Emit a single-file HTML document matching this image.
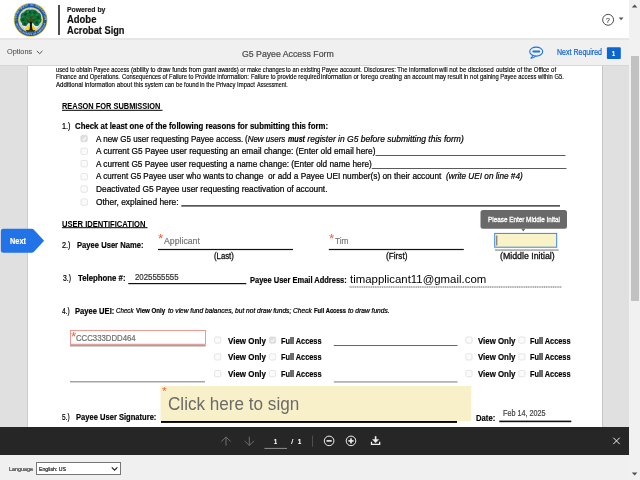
<!DOCTYPE html>
<html lang="en">
<head>
<meta charset="utf-8">
<title>G5 Payee Access Form</title>
<style>
html,body{margin:0;padding:0;width:640px;height:480px;overflow:hidden;background:#fff;}
body{position:relative;font-family:"Liberation Sans",sans-serif;}
.t{-webkit-text-stroke:0.22px currentColor;position:absolute;white-space:pre;transform-origin:0 50%;display:inline-block;}
.r{position:absolute;}
em.m{display:inline-block;width:0;height:0;vertical-align:baseline;}
svg{position:absolute;overflow:visible;}
</style>
</head>
<body>
<div id="app" style="position:absolute;left:0;top:0;width:640px;height:480px;will-change:transform">
<!-- layout backgrounds -->
<div class="r" style="left:0;top:0;width:629px;height:39px;background:#fff"></div>
<div class="r" style="left:0;top:38.500px;width:629px;height:27px;background:#f0f0f0"></div>
<div class="r" style="left:0;top:38px;width:629px;height:1.500px;background:#e6e6e6"></div>
<div class="r" style="left:0;top:65.500px;width:629px;height:361.500px;background:#e0e0e0"></div>
<div class="r" style="left:0;top:65.300px;width:629px;height:0.800px;background:#d6d6d6"></div>
<div class="r" style="left:26.800px;top:65.500px;width:574.700px;height:361.500px;background:#fff;border-right:1px solid #c6c6c6;border-left:0.800px solid #cdcdcd"></div>
<div class="r" style="left:0;top:427px;width:629px;height:28.200px;background:#262626"></div>
<div class="r" style="left:0;top:455px;width:629px;height:25px;background:#f0f0f0"></div>
<!-- scrollbar -->
<div class="r" style="left:629px;top:0;width:11px;height:480px;background:#f1f1f1"></div>
<div class="r" style="left:631px;top:56px;width:8px;height:245px;background:#c1c1c1"></div>
<svg style="left:629px;top:0" width="11" height="480"><path d="M2.8 7.6 L5.6 4.4 L8.4 7.6Z" fill="#505050"/><path d="M2.8 472.4 L5.6 475.6 L8.4 472.4Z" fill="#505050"/></svg>
<!-- header: seal -->
<svg style="left:0;top:0" width="60" height="39" viewBox="0 0 60 39">
<defs>
<path id="arcTop" d="M16.400 19.800 A14.200 14.200 0 0 1 44.800 19.800"/>
<path id="arcBot" d="M15.300 19.800 A15.300 15.300 0 0 0 45.900 19.800"/>
</defs>
<circle cx="30.600" cy="19.800" r="16.900" fill="#e3c51e"/>
<circle cx="30.600" cy="19.800" r="16.100" fill="#1c57ab"/>
<text font-family="Liberation Sans, sans-serif" font-size="2.700" font-weight="bold" fill="#b9cdf0" letter-spacing="0.250"><textPath href="#arcTop" startOffset="50%" text-anchor="middle">DEPARTMENT OF EDUCATION</textPath></text>
<text font-family="Liberation Sans, sans-serif" font-size="2.500" font-weight="bold" fill="#b9cdf0" letter-spacing="0.200"><textPath href="#arcBot" startOffset="50%" text-anchor="middle">UNITED STATES OF AMERICA</textPath></text>
<circle cx="30.600" cy="19.800" r="12.500" fill="#e3c51e"/>
<circle cx="30.600" cy="19.800" r="11.800" fill="#dde2f4"/>
<circle cx="30.600" cy="19.800" r="10.900" fill="none" stroke="#9db0e0" stroke-width="1.100" stroke-dasharray="0.800 0.800"/>
<!-- canopy -->
<path d="M30.600 9.700 C33.600 9 36.700 10.200 38 12.400 C40.400 13.100 41.600 15.500 41 17.800 C42.100 19.900 41.400 22.600 39.500 23.700 C39.300 25.500 37.400 26.500 35.700 25.900 C34.600 25.600 33.900 24.800 33.700 23.800 L32.300 22.900 L29 23 L27.600 24 C27.400 25.400 26.100 26.300 24.700 26.100 C23 25.900 21.700 24.500 21.900 22.900 C20.100 21.600 19.600 19.200 20.700 17.400 C20.100 15.100 21.500 12.800 23.800 12.300 C24.900 10.200 27.800 9 30.600 9.700Z" fill="#12733a"/>
<g fill="#0a4f25">
<circle cx="25.500" cy="14.200" r="1.500"/><circle cx="34.600" cy="12.700" r="1.400"/><circle cx="38.200" cy="17.700" r="1.600"/><circle cx="23" cy="19.700" r="1.500"/><circle cx="30" cy="12.200" r="1.200"/><circle cx="36.700" cy="22.700" r="1.400"/><circle cx="24.800" cy="23.700" r="1.200"/><circle cx="33.500" cy="20" r="1.100"/><circle cx="27.800" cy="21" r="1"/>
</g>
<g fill="#27964f">
<circle cx="28" cy="11.700" r="0.900"/><circle cx="32.500" cy="15.200" r="0.900"/><circle cx="37" cy="14.700" r="0.800"/><circle cx="22.800" cy="16.700" r="0.800"/><circle cx="39.200" cy="20.700" r="0.800"/><circle cx="27" cy="18.200" r="0.800"/>
</g>
<!-- base -->
<path d="M25 30.600 C25.300 27.200 27.700 25.300 30.500 25.300 C33.300 25.300 35.600 27.200 35.900 30.600Z" fill="#f5d90a"/>
<path d="M25.600 30.200 H35.400 L34.200 31.700 H26.800Z" fill="#14120a"/>
<!-- branches (olive) and trunk (dark) -->
<path d="M29.600 22.800 L26.400 19.900 L25.200 17.200 L25.800 16.900 L27.100 19.300 L30 21.400 L30.300 17.800 L28.900 14.900 L29.500 14.600 L31 17.300 L33.400 14.600 L33.900 15 L31.600 18.200 L31.400 21.200 L34.900 19.100 L36.600 18.700 L36.800 19.300 L35.300 19.900 L32 22.800Z" fill="#4a4312"/>
<path d="M29.300 30.200 C30.100 27.600 30.200 25 29.500 22.600 L30.800 21.600 L32.200 22.600 C31.600 25 31.900 27.600 32.900 30.200Z" fill="#17130a"/>
</svg>
<div class="r" style="left:58.400px;top:4.600px;width:1.600px;height:30.800px;background:#4d4d4d"></div>
<!-- help icon -->
<svg style="left:601px;top:12px" width="26" height="14" viewBox="0 0 26 14">
<circle cx="7.1" cy="7.8" r="5.45" fill="none" stroke="#3a3a3a" stroke-width="0.9"/>
<path d="M17.700 5.600h4.800l-2.400 2.700z" fill="#555"/>
</svg>
<!-- toolbar icons -->
<svg style="left:0;top:39px" width="629" height="27" viewBox="0 39 629 27">
<path d="M36.800 50.900 L39.650 53.700 L42.500 50.900" fill="none" stroke="#505050" stroke-width="1"/>
<g fill="none" stroke="#1473e6" stroke-width="1.1">
<ellipse cx="536.2" cy="51.600" rx="6.500" ry="4.500"/>
<path d="M532.600 55.200 C532.600 57 531.800 57.800 530.600 58.200 C532.800 58.300 534.600 57.400 535.500 56"/>
</g>
<rect x="532.400" y="50.600" width="7.800" height="1.900" rx="0.900" fill="#1473e6"/>
<rect x="606.900" y="47.200" width="13.900" height="11.800" rx="1" fill="#0d66d0"/>
</svg>
<!-- document shapes -->
<svg style="left:0;top:66px" width="629" height="361" viewBox="0 66 629 361">
<!-- heading underlines -->
<rect x="62" y="109.800" width="100.500" height="1" fill="#000"/>
<rect x="62" y="227.200" width="85.500" height="1" fill="#000"/>
<!-- reason lines -->
<rect x="375.500" y="155.200" width="190" height="0.800" fill="#333"/>
<rect x="371.800" y="168" width="194.700" height="0.800" fill="#333"/>
<rect x="181.300" y="205.300" width="378.700" height="1.200" fill="#111"/>
<!-- checkboxes reasons -->
<g fill="#fbfbfb" stroke="#dedede" stroke-width="0.800">
<rect x="80.900" y="135.300" width="6.400" height="6.400" rx="1.300" fill="#dedede" stroke="#dadada"/>
<rect x="81" y="148.200" width="6.400" height="6.400" rx="1.300"/>
<rect x="81" y="160.500" width="6.400" height="6.400" rx="1.300"/>
<rect x="81" y="173.400" width="6.400" height="6.400" rx="1.300"/>
<rect x="81" y="185.900" width="6.400" height="6.400" rx="1.300"/>
<rect x="81" y="198.900" width="6.400" height="6.400" rx="1.300"/>
</g>
<path d="M82.500 138.700 L83.900 140.100 L86 137.100" fill="none" stroke="#fafafa" stroke-width="1.100"/>
<!-- next button -->
<path d="M0.900 231.300 Q0.900 228.800 3.400 228.800 L31.800 228.800 Q32.900 228.800 33.700 229.600 L44.100 240.750 L33.700 251.900 Q32.900 252.700 31.800 252.700 L3.400 252.700 Q0.900 252.700 0.900 250.200 Z" fill="#2173e7"/>
<!-- name fields -->
<rect x="158" y="248.900" width="135" height="1.200" fill="#111"/>
<rect x="328.800" y="248.900" width="135" height="1.200" fill="#111"/>
<rect x="495" y="249.500" width="63.700" height="1.100" fill="#808080"/>
<!-- tooltip -->
<rect x="480.500" y="210" width="86.500" height="18.800" rx="2.500" fill="#696969"/>
<path d="M521.200 228.700 L525.400 228.700 L523.300 231.400Z" fill="#696969"/>
<!-- middle initial active field -->
<rect x="494.700" y="233.400" width="62" height="13.800" fill="#fbf3c8" stroke="#3b86e0" stroke-width="1"/>
<rect x="496.500" y="235.500" width="0.700" height="10" fill="#222"/>
<!-- phone / email lines -->
<rect x="128.300" y="283" width="118" height="1.200" fill="#111"/>
<path d="M349.500 287 H561.800" stroke="#333" stroke-width="0.800" stroke-dasharray="1.200 0.600"/>
<!-- UEI box -->
<rect x="70" y="344.400" width="135.700" height="2.100" fill="#a2a2a2"/>
<rect x="70.500" y="330.500" width="135" height="13.700" fill="#fff" stroke="#ec837b" stroke-width="0.800"/>
<rect x="70" y="381.400" width="135" height="0.900" fill="#6a6a6a"/>
<rect x="333.800" y="345.100" width="123.700" height="0.900" fill="#555"/>
<rect x="333.800" y="381.500" width="123.700" height="0.900" fill="#6a6a6a"/>
<!-- access checkboxes -->
<g fill="#fbfbfb" stroke="#dedede" stroke-width="0.800">
<rect x="214.600" y="337" width="6.200" height="6.200" rx="1.300"/>
<rect x="269.400" y="337" width="6.200" height="6.200" rx="1.300" fill="#dedede" stroke="#dadada"/>
<rect x="214.600" y="353.800" width="6.200" height="6.200" rx="1.300"/>
<rect x="269.400" y="353.800" width="6.200" height="6.200" rx="1.300"/>
<rect x="214.600" y="370.500" width="6.200" height="6.200" rx="1.300"/>
<rect x="269.400" y="370.500" width="6.200" height="6.200" rx="1.300"/>
<rect x="465.900" y="337" width="6.200" height="6.200" rx="1.300"/>
<rect x="518.800" y="337" width="6.200" height="6.200" rx="1.300"/>
<rect x="465.900" y="353.800" width="6.200" height="6.200" rx="1.300"/>
<rect x="518.800" y="353.800" width="6.200" height="6.200" rx="1.300"/>
<rect x="465.900" y="370.500" width="6.200" height="6.200" rx="1.300"/>
<rect x="518.800" y="370.500" width="6.200" height="6.200" rx="1.300"/>
</g>
<path d="M270.900 340.300 L272.300 341.700 L274.400 338.700" fill="none" stroke="#fafafa" stroke-width="1.100"/>
<!-- signature block -->
<rect x="160.500" y="386" width="310.800" height="35.200" fill="#f8f0c9"/>
<rect x="161" y="421" width="296" height="1.900" fill="#000"/>
<rect x="499.300" y="420.600" width="72" height="1.600" fill="#111"/>
</svg>
<!-- bottom bar icons -->
<svg style="left:0;top:427px" width="629" height="28" viewBox="0 427 629 28">
<g fill="none" stroke="#6e6e6e" stroke-width="1">
<path d="M226 445.600 V437.200 M221.300 441.600 L226 436.900 L230.700 441.600"/>
<path d="M249.300 436.800 V445.200 M244.600 440.800 L249.300 445.500 L254 440.800"/>
</g>
<rect x="264.400" y="447.900" width="22.600" height="1" fill="#8e8e8e"/>
<rect x="312" y="435.600" width="0.800" height="11" fill="#5a5a5a"/>
<g fill="none" stroke="#f0f0f0" stroke-width="1">
<circle cx="329.100" cy="440.900" r="4.800"/>
<circle cx="351" cy="440.900" r="4.800"/>
</g>
<rect x="326.500" y="440.100" width="5.200" height="1.600" fill="#f0f0f0"/>
<rect x="348.400" y="440.100" width="5.200" height="1.600" fill="#f0f0f0"/>
<rect x="350.200" y="438.300" width="1.600" height="5.200" fill="#f0f0f0"/>
<g fill="none" stroke="#f0f0f0" stroke-width="1.200">
<path d="M375.600 436.200 V440.500" stroke-width="1.600"/><path d="M372.500 439.500 H378.700 L375.600 442.800Z" fill="#f0f0f0" stroke-width="0.400"/>
<path d="M371.500 441.800 V444.400 H379.700 V441.800" stroke-width="1.300"/>
<path d="M613.300 437.700 L619.700 444.100 M619.700 437.700 L613.300 444.100" stroke-width="1"/>
</g>
</svg>
<!-- footer select -->
<div class="r" style="left:36.100px;top:462.400px;width:82.700px;height:10.800px;background:#fff;border:0.800px solid #767676"></div>
<svg style="left:0;top:455px" width="629" height="25" viewBox="0 455 629 25">
<path d="M111.800 467.300 L114.600 470.100 L117.400 467.300" fill="none" stroke="#222" stroke-width="1.200"/>
</svg>

<span class="t" style="left:66.6px;top:5.60px;font-size:7.2px;line-height:7.2px;color:#1a1a1a;font-weight:bold;-webkit-text-stroke:0.18px currentColor;transform:scaleX(0.9518);">Powered by</span>
<span class="t" style="left:66.6px;top:14.80px;font-size:10px;line-height:10px;color:#111;font-weight:bold;-webkit-text-stroke:0.18px currentColor;transform:scaleX(0.9451);">Adobe</span>
<span class="t" style="left:66.6px;top:25.50px;font-size:10px;line-height:10px;color:#111;font-weight:bold;-webkit-text-stroke:0.18px currentColor;transform:scaleX(0.9239);">Acrobat Sign</span>
<span class="t" style="left:606.3px;top:17.00px;font-size:8px;line-height:8px;color:#333;-webkit-text-stroke:0.1px #333;transform:scaleX(0.8533);">?</span>
<span class="t" style="left:6.8px;top:48.40px;font-size:7.6px;line-height:7.6px;color:#4f4f4f;-webkit-text-stroke:0.08px #4f4f4f;transform:scaleX(0.9590);">Options</span>
<span class="t" style="left:241.8px;top:50.00px;font-size:8.8px;line-height:8.8px;color:#4b4b4b;transform:scaleX(0.9924);">G5 Payee Access Form</span>
<span class="t" style="left:557px;top:48.10px;font-size:8.4px;line-height:8.4px;color:#1266d4;transform:scaleX(0.8404);">Next Required</span>
<span class="t" style="left:612.3px;top:49.70px;font-size:7px;line-height:7px;color:#fff;font-weight:bold;-webkit-text-stroke:0.18px currentColor;transform:scaleX(0.7936);">1</span>
<span class="t" style="left:56.2px;top:66.50px;font-size:6.5px;line-height:6.5px;color:#000;-webkit-text-stroke:0.14px #000;transform:scaleX(0.8796);">used to obtain Payee access </span>
<span class="t" style="left:130.9px;top:66.50px;font-size:6.5px;line-height:6.5px;color:#000;-webkit-text-stroke:0.14px #000;transform:scaleX(0.9418);">(ability to draw funds from </span>
<span class="t" style="left:202.7px;top:66.50px;font-size:6.5px;line-height:6.5px;color:#000;-webkit-text-stroke:0.14px #000;transform:scaleX(0.8957);">grant awards) or make changes </span>
<span class="t" style="left:286.2px;top:66.50px;font-size:6.5px;line-height:6.5px;color:#000;-webkit-text-stroke:0.14px #000;transform:scaleX(0.8941);">to an existing Payee account. </span>
<span class="t" style="left:363.75px;top:66.50px;font-size:6.5px;line-height:6.5px;color:#000;-webkit-text-stroke:0.14px #000;transform:scaleX(0.8999);">Disclosures: The information </span>
<span class="t" style="left:439.4px;top:66.50px;font-size:6.5px;line-height:6.5px;color:#000;-webkit-text-stroke:0.14px #000;transform:scaleX(0.9442);">will not be disclosed </span>
<span class="t" style="left:495.7px;top:66.50px;font-size:6.5px;line-height:6.5px;color:#000;-webkit-text-stroke:0.14px #000;transform:scaleX(0.9257);">outside of the Office of</span>
<span class="t" style="left:56.2px;top:74.30px;font-size:6.5px;line-height:6.5px;color:#000;-webkit-text-stroke:0.14px #000;transform:scaleX(0.8986);">Finance and Operations. </span>
<span class="t" style="left:121.8px;top:74.30px;font-size:6.5px;line-height:6.5px;color:#000;-webkit-text-stroke:0.14px #000;transform:scaleX(0.8990);">Consequences of Failure to </span>
<span class="t" style="left:194.9px;top:74.30px;font-size:6.5px;line-height:6.5px;color:#000;-webkit-text-stroke:0.14px #000;transform:scaleX(0.9342);">Provide information: </span>
<span class="t" style="left:250.6px;top:74.30px;font-size:6.5px;line-height:6.5px;color:#000;-webkit-text-stroke:0.14px #000;transform:scaleX(0.9101);">Failure to provide required </span>
<span class="t" style="left:321.3px;top:74.30px;font-size:6.5px;line-height:6.5px;color:#000;-webkit-text-stroke:0.14px #000;transform:scaleX(0.9537);">information or forego creating </span>
<span class="t" style="left:404px;top:74.30px;font-size:6.5px;line-height:6.5px;color:#000;-webkit-text-stroke:0.14px #000;transform:scaleX(0.9145);">an account may result in not </span>
<span class="t" style="left:480px;top:74.30px;font-size:6.5px;line-height:6.5px;color:#000;-webkit-text-stroke:0.14px #000;transform:scaleX(0.8919);">gaining Payee access within G5.</span>
<span class="t" style="left:56.2px;top:82.25px;font-size:6.5px;line-height:6.5px;color:#000;-webkit-text-stroke:0.14px #000;transform:scaleX(0.9443);">Additional information about </span>
<span class="t" style="left:134px;top:82.25px;font-size:6.5px;line-height:6.5px;color:#000;-webkit-text-stroke:0.14px #000;transform:scaleX(0.8994);">this system can be found </span>
<span class="t" style="left:200.3px;top:82.25px;font-size:6.5px;line-height:6.5px;color:#000;-webkit-text-stroke:0.14px #000;transform:scaleX(0.9092);">in the Privacy Impact </span>
<span class="t" style="left:256.8px;top:82.25px;font-size:6.5px;line-height:6.5px;color:#000;-webkit-text-stroke:0.14px #000;transform:scaleX(0.8275);">Assessment.</span>
<span class="t" style="left:62px;top:102.10px;font-size:8.9px;line-height:8.9px;color:#000;font-weight:bold;-webkit-text-stroke:0.18px currentColor;-webkit-text-stroke:0.05px #000;transform:scaleX(0.8352);">REASON FOR SUBMISSION&nbsp;</span>
<span class="t" style="left:62px;top:122.25px;font-size:8.6px;line-height:8.6px;color:#000;transform:scaleX(0.8474);">1.)</span>
<span class="t" style="left:74.5px;top:122.25px;font-size:8.4px;line-height:8.4px;color:#000;font-weight:bold;-webkit-text-stroke:0.18px currentColor;transform:scaleX(0.9310);">Check at least one of the following reasons for submitting this form:</span>
<span class="t" style="left:95.5px;top:134.75px;font-size:8.6px;line-height:8.6px;color:#000;transform:scaleX(0.9369);">A new G5 user requesting Payee access. </span>
<span class="t" style="left:245px;top:134.75px;font-size:8.6px;line-height:8.6px;color:#000;transform:scaleX(0.9267);">(<i>New users </i></span>
<span class="t" style="left:287.5px;top:134.75px;font-size:8.6px;line-height:8.6px;color:#000;font-weight:bold;-webkit-text-stroke:0.18px currentColor;font-style:italic;transform:scaleX(0.8274);">must</span>
<span class="t" style="left:304.5px;top:134.75px;font-size:8.6px;line-height:8.6px;color:#000;font-style:italic;transform:scaleX(0.9892);"> register in G5 before submitting this form)</span>
<span class="t" style="left:95.5px;top:147.25px;font-size:8.6px;line-height:8.6px;color:#000;transform:scaleX(0.9655);">A current G5 Payee user requesting an email change: (Enter old email here)</span>
<span class="t" style="left:95.5px;top:159.75px;font-size:8.6px;line-height:8.6px;color:#000;transform:scaleX(0.9621);">A current G5 Payee user requesting a name change: (Enter old name here)</span>
<span class="t" style="left:95.5px;top:172.40px;font-size:8.6px;line-height:8.6px;color:#000;transform:scaleX(0.9356);">A current G5 Payee user who wants </span>
<span class="t" style="left:226px;top:172.40px;font-size:8.6px;line-height:8.6px;color:#000;transform:scaleX(0.9969);">to change  </span>
<span class="t" style="left:268.4px;top:172.40px;font-size:8.6px;line-height:8.6px;color:#000;transform:scaleX(0.9626);">or add a Payee UEI number(s) on their account</span>
<span class="t" style="left:446.25px;top:172.40px;font-size:8.6px;line-height:8.6px;color:#000;font-style:italic;transform:scaleX(0.9564);">(write UEI on line #4)</span>
<span class="t" style="left:95.5px;top:185.00px;font-size:8.6px;line-height:8.6px;color:#000;transform:scaleX(0.9711);">Deactivated G5 Payee user requesting reactivation of account.</span>
<span class="t" style="left:95.5px;top:197.50px;font-size:8.6px;line-height:8.6px;color:#000;transform:scaleX(0.9756);">Other, explained here:</span>
<span class="t" style="left:62px;top:219.50px;font-size:8.9px;line-height:8.9px;color:#000;font-weight:bold;-webkit-text-stroke:0.18px currentColor;-webkit-text-stroke:0.05px #000;transform:scaleX(0.8555);">USER IDENTIFICATION&nbsp;</span>
<span class="t" style="left:9.8px;top:236.75px;font-size:8.3px;line-height:8.3px;color:#fff;font-weight:bold;-webkit-text-stroke:0.18px currentColor;transform:scaleX(0.8897);">Next</span>
<span class="t" style="left:62px;top:241.00px;font-size:8.6px;line-height:8.6px;color:#000;transform:scaleX(0.8474);">2.)</span>
<span class="t" style="left:76.75px;top:241.00px;font-size:8.6px;line-height:8.6px;color:#000;font-weight:bold;-webkit-text-stroke:0.18px currentColor;transform:scaleX(0.8865);">Payee User Name:</span>
<span class="t" style="left:157.8px;top:231.70px;font-size:13px;line-height:13px;color:#f0623a;-webkit-text-stroke:0;transform:scaleX(1.0469);">*</span>
<span class="t" style="left:163.75px;top:236.60px;font-size:9.2px;line-height:9.2px;color:#777;transform:scaleX(0.9485);">Applicant</span>
<span class="t" style="left:214.4px;top:252.00px;font-size:8.5px;line-height:8.5px;color:#111;-webkit-text-stroke:0.3px #111;transform:scaleX(0.9133);">(Last)</span>
<span class="t" style="left:328.5px;top:231.70px;font-size:13px;line-height:13px;color:#f0623a;-webkit-text-stroke:0;transform:scaleX(1.0469);">*</span>
<span class="t" style="left:334.5px;top:236.60px;font-size:9.2px;line-height:9.2px;color:#777;transform:scaleX(0.9019);">Tim</span>
<span class="t" style="left:385.5px;top:252.00px;font-size:8.5px;line-height:8.5px;color:#111;-webkit-text-stroke:0.3px #111;transform:scaleX(0.9690);">(First)</span>
<span class="t" style="left:499.5px;top:252.00px;font-size:8.5px;line-height:8.5px;color:#111;-webkit-text-stroke:0.3px #111;transform:scaleX(1.0348);">(Middle Initial)</span>
<span class="t" style="left:488px;top:216.50px;font-size:6.9px;line-height:6.9px;color:#fff;-webkit-text-stroke:0.3px #fff;transform:scaleX(0.9214);">Please Enter Middle Inital</span>
<span class="t" style="left:63px;top:273.75px;font-size:8.6px;line-height:8.6px;color:#000;transform:scaleX(0.7975);">3.)</span>
<span class="t" style="left:77.5px;top:273.75px;font-size:8.6px;line-height:8.6px;color:#000;font-weight:bold;-webkit-text-stroke:0.18px currentColor;transform:scaleX(0.9069);">Telephone #:</span>
<span class="t" style="left:134.5px;top:272.50px;font-size:8.3px;line-height:8.3px;color:#333;transform:scaleX(0.9425);">2025555555</span>
<span class="t" style="left:250px;top:275.50px;font-size:8.6px;line-height:8.6px;color:#000;font-weight:bold;-webkit-text-stroke:0.18px currentColor;transform:scaleX(0.8717);">Payee User Email Address:</span>
<span class="t" style="left:349.5px;top:272.50px;font-size:11.6px;line-height:11.6px;color:#000;-webkit-text-stroke:0;transform:scaleX(0.9838);">timapplicant11@gmail.com</span>
<span class="t" style="left:62.4px;top:306.90px;font-size:8.6px;line-height:8.6px;color:#000;transform:scaleX(0.7576);">4.)</span>
<span class="t" style="left:75px;top:306.90px;font-size:8.6px;line-height:8.6px;color:#000;font-weight:bold;-webkit-text-stroke:0.18px currentColor;transform:scaleX(0.8844);">Payee UEI:</span>
<span class="t" style="left:116.25px;top:308.25px;font-size:6.3px;line-height:6.3px;color:#000;font-style:italic;transform:scaleX(0.9799);">Check</span>
<span class="t" style="left:136.25px;top:308.25px;font-size:6.3px;line-height:6.3px;color:#000;font-weight:bold;-webkit-text-stroke:0.18px currentColor;transform:scaleX(0.9755);">View Only</span>
<span class="t" style="left:168px;top:308.25px;font-size:6.3px;line-height:6.3px;color:#000;font-style:italic;transform:scaleX(1.0476);">to view fund balances, but not draw funds; Check</span>
<span class="t" style="left:314.25px;top:308.25px;font-size:6.3px;line-height:6.3px;color:#000;font-weight:bold;-webkit-text-stroke:0.18px currentColor;transform:scaleX(0.9204);">Full Access</span>
<span class="t" style="left:348.4px;top:308.25px;font-size:6.3px;line-height:6.3px;color:#000;font-style:italic;transform:scaleX(1.0515);">to draw funds.</span>
<span class="t" style="left:70.8px;top:329.50px;font-size:13px;line-height:13px;color:#f0623a;-webkit-text-stroke:0;transform:scaleX(1.0469);">*</span>
<span class="t" style="left:76.4px;top:334.10px;font-size:8.8px;line-height:8.8px;color:#707070;transform:scaleX(0.8846);">CCC333DDD464</span>
<span class="t" style="left:228.25px;top:336.75px;font-size:8.5px;line-height:8.5px;color:#000;font-weight:bold;-webkit-text-stroke:0.18px currentColor;transform:scaleX(0.9386);">View Only</span>
<span class="t" style="left:280.75px;top:336.75px;font-size:8.5px;line-height:8.5px;color:#000;font-weight:bold;-webkit-text-stroke:0.18px currentColor;transform:scaleX(0.8628);">Full Access</span>
<span class="t" style="left:477.5px;top:336.75px;font-size:8.5px;line-height:8.5px;color:#000;font-weight:bold;-webkit-text-stroke:0.18px currentColor;transform:scaleX(0.9263);">View Only</span>
<span class="t" style="left:530px;top:336.75px;font-size:8.5px;line-height:8.5px;color:#000;font-weight:bold;-webkit-text-stroke:0.18px currentColor;transform:scaleX(0.8628);">Full Access</span>
<span class="t" style="left:228.25px;top:353.10px;font-size:8.5px;line-height:8.5px;color:#000;font-weight:bold;-webkit-text-stroke:0.18px currentColor;transform:scaleX(0.9386);">View Only</span>
<span class="t" style="left:280.75px;top:353.10px;font-size:8.5px;line-height:8.5px;color:#000;font-weight:bold;-webkit-text-stroke:0.18px currentColor;transform:scaleX(0.8628);">Full Access</span>
<span class="t" style="left:477.5px;top:353.10px;font-size:8.5px;line-height:8.5px;color:#000;font-weight:bold;-webkit-text-stroke:0.18px currentColor;transform:scaleX(0.9263);">View Only</span>
<span class="t" style="left:530px;top:353.10px;font-size:8.5px;line-height:8.5px;color:#000;font-weight:bold;-webkit-text-stroke:0.18px currentColor;transform:scaleX(0.8628);">Full Access</span>
<span class="t" style="left:228.25px;top:369.75px;font-size:8.5px;line-height:8.5px;color:#000;font-weight:bold;-webkit-text-stroke:0.18px currentColor;transform:scaleX(0.9386);">View Only</span>
<span class="t" style="left:280.75px;top:369.75px;font-size:8.5px;line-height:8.5px;color:#000;font-weight:bold;-webkit-text-stroke:0.18px currentColor;transform:scaleX(0.8628);">Full Access</span>
<span class="t" style="left:477.5px;top:369.75px;font-size:8.5px;line-height:8.5px;color:#000;font-weight:bold;-webkit-text-stroke:0.18px currentColor;transform:scaleX(0.9263);">View Only</span>
<span class="t" style="left:530px;top:369.75px;font-size:8.5px;line-height:8.5px;color:#000;font-weight:bold;-webkit-text-stroke:0.18px currentColor;transform:scaleX(0.8628);">Full Access</span>
<span class="t" style="left:161.9px;top:386.40px;font-size:11.5px;line-height:11.5px;color:#f0623a;-webkit-text-stroke:0;transform:scaleX(1.0481);">*</span>
<span class="t" style="left:167.5px;top:395.00px;font-size:18.7px;line-height:18.7px;color:#6b6b6b;-webkit-text-stroke:0;transform:scaleX(0.9156);">Click here to sign</span>
<span class="t" style="left:62.4px;top:412.70px;font-size:8.6px;line-height:8.6px;color:#000;transform:scaleX(0.7576);">5.)</span>
<span class="t" style="left:75.6px;top:412.70px;font-size:8.6px;line-height:8.6px;color:#000;font-weight:bold;-webkit-text-stroke:0.18px currentColor;transform:scaleX(0.8812);">Payee User Signature:</span>
<span class="t" style="left:476.25px;top:413.50px;font-size:8.6px;line-height:8.6px;color:#000;font-weight:bold;-webkit-text-stroke:0.18px currentColor;transform:scaleX(0.8953);">Date:</span>
<span class="t" style="left:502.5px;top:409.25px;font-size:8.5px;line-height:8.5px;color:#444;transform:scaleX(0.8481);">Feb 14, 2025</span>
<span class="t" style="left:274.4px;top:437.70px;font-size:7px;line-height:7px;color:#fff;font-weight:bold;-webkit-text-stroke:0.18px currentColor;transform:scaleX(0.7936);">1</span>
<span class="t" style="left:291.2px;top:437.70px;font-size:7px;line-height:7px;color:#fff;">/</span>
<span class="t" style="left:298.2px;top:437.70px;font-size:7px;line-height:7px;color:#fff;font-weight:bold;-webkit-text-stroke:0.18px currentColor;transform:scaleX(0.8192);">1</span>
<span class="t" style="left:9.2px;top:466.80px;font-size:5.8px;line-height:5.8px;color:#444;transform:scaleX(0.9342);">Language</span>
<span class="t" style="left:39px;top:466.20px;font-size:6.2px;line-height:6.2px;color:#222;transform:scaleX(0.8352);">English: US</span>
</div>
</body>
</html>
